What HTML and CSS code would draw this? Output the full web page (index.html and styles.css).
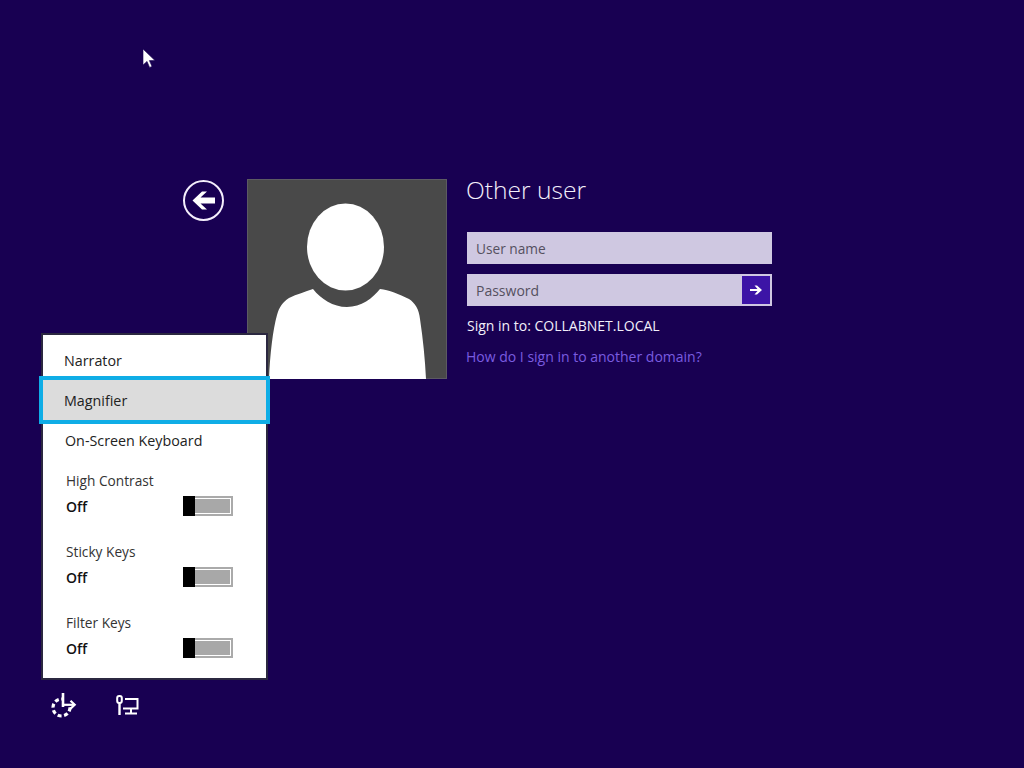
FILE: index.html
```html
<!DOCTYPE html>
<html lang="en">
<head>
<meta charset="utf-8">
<title>Sign in</title>
<link rel="stylesheet" href="styles.css">
</head>
<body>
<main class="screen">
  <svg class="cursor" width="14" height="21" viewBox="0 0 14 21"><path d="M1 1v16l4-3.600 2.600 6 2.400-1-2.600-5.800H13z" fill="#fff" stroke="#180052" stroke-width=".6"/></svg>

  <section class="login">
    <button class="back" type="button" aria-label="Back">
      <svg width="42" height="42" viewBox="0 0 42 42"><circle cx="21.500" cy="20.500" r="19.500" fill="none" stroke="#f4eefc" stroke-width="2"/><path d="M10.500 20.500l9.500-9h5l-6.500 6h14.500v6H18.500l6.500 6h-5z" fill="#fff"/></svg>
    </button>
    <div class="tile">
      <svg width="200" height="200" viewBox="0 0 200 200"><ellipse cx="98.500" cy="68" rx="38.500" ry="43.500" fill="#fff"/><path d="M22 200C23 175 26 150 30 136C32 128 36 123 42 119C50 115 58 113 66 110C74 120 86 128 100 128C114 128 126 119 133 110C142 111 152 115 162 120C168 124 172 130 173 140C176 160 178 180 179 200Z" fill="#fff"/></svg>
    </div>
    <div class="form">
      <h1 class="title">Other user</h1>
      <div class="field">User name</div>
      <div class="field field-password">
        <span>Password</span>
        <span class="submit"><svg width="14" height="12" viewBox="0 0 14 12"><path d="M1 5h7.500L5.500 1.500H8L13 6 8 10.500H5.500L8.500 7H1z" fill="#fff"/></svg></span>
      </div>
      <p class="domain">Sign in to: COLLABNET.LOCAL</p>
      <a class="link" href="#">How do I sign in to another domain?</a>
    </div>
  </section>

  <section class="access">
    <div class="menu">
      <div class="item item-narrator">Narrator</div>
      <div class="item item-focus">Magnifier</div>
      <div class="item item-keyboard">On-Screen Keyboard</div>
      <div class="group">
        <div class="group-label">High Contrast</div>
        <div class="group-row"><span class="state">Off</span><span class="toggle"><span class="thumb"></span></span></div>
      </div>
      <div class="group">
        <div class="group-label">Sticky Keys</div>
        <div class="group-row"><span class="state">Off</span><span class="toggle"><span class="thumb"></span></span></div>
      </div>
      <div class="group">
        <div class="group-label">Filter Keys</div>
        <div class="group-row"><span class="state">Off</span><span class="toggle"><span class="thumb"></span></span></div>
      </div>
    </div>
    <div class="tray">
      <svg width="26" height="26" viewBox="0 0 26 26" fill="none" stroke="#fff"><circle cx="10.500" cy="15.500" r="8.500" stroke-width="3.200" stroke-dasharray="4 2.600"/><path d="M13 5h9v8h-9z" fill="#180052" stroke="none"/><path d="M12 1v14" stroke-width="2.600"/><path d="M12 12.800h11.500" stroke-width="2.200"/><path d="M19.500 8.800l4.200 4-4.200 4" stroke-width="2.200"/></svg>
      <svg width="23" height="21" viewBox="0 0 23 21" fill="none" stroke="#fff" stroke-width="2"><rect x="1.200" y="1" width="4.600" height="7" rx="2"/><path d="M3.500 8v12" stroke-width="2.400"/><path d="M9 4h12.500v9.500H7M15 13.500V18M9 18.500h12"/></svg>
    </div>
  </section>
</main>
</body>
</html>
```
FILE: styles.css
```css
* { box-sizing: border-box; }
html, body { margin: 0; padding: 0; }
body { background: #180052; font-family: "Open Sans", "Noto Sans", sans-serif; }
.screen { position: relative; width: 1024px; height: 768px; overflow: hidden; background: #180052; }
.cursor { position: absolute; left: 142px; top: 48px; }

.login { display: flex; align-items: flex-start; padding: 179px 0 0 182px; }
.back { flex: none; width: 42px; height: 42px; margin: 1px 23px 0 0; padding: 0; background: none; border: 0; }
.back svg { display: block; }
.tile { flex: none; width: 200px; height: 200px; background: #494949; box-shadow: inset 0 0 0 1px #5c5a62; }
.tile svg { display: block; }
.form { width: 305px; margin-left: 20px; color: #fff; }
.title { margin: 0 0 21px -1px; height: 32px; font-size: 24.600px; line-height: 22px; font-weight: 300; color: #f3effa; white-space: nowrap; }
.field { display: flex; align-items: center; justify-content: space-between; height: 32px; padding-left: 9px; margin-bottom: 10px; background: #cfc8e1; color: #55505f; font-size: 13.700px; }
.field-password { padding-right: 2px; font-size: 14px; }
.submit { display: flex; align-items: center; justify-content: center; width: 28px; height: 28px; background: #3c14a6; }
.submit svg { display: block; }
.domain { margin: 0 0 10px; font-size: 14px; line-height: 20px; color: #f2effa; white-space: nowrap; }
.link { display: block; font-size: 14px; line-height: 21px; color: #7a5ce0; text-decoration: none; margin-left: -1px; white-space: nowrap; }

.access { position: absolute; left: 41px; top: 333px; width: 227px; }
.menu { width: 227px; height: 347px; padding-top: 10px; background: #fff; border: 2px solid #2b2840; color: #222; font-size: 14.300px; }
.item { display: flex; align-items: center; }
.item-narrator { height: 31px; padding-left: 21px; }
.item-focus { height: 48px; margin: 0 -4px; padding-left: 21px; background: #dcdcdc; border: 4px solid #0fade6; }
.item-keyboard { height: 32px; padding-left: 22px; }
.group { width: 190px; margin-left: 23px; height: 71px; }
.item-keyboard + .group { margin-top: 15px; }
.group-label { height: 20px; line-height: 20px; font-size: 13.700px; color: #333; white-space: nowrap; }
.group-row { display: flex; align-items: center; justify-content: space-between; width: 167px; height: 20px; margin-top: 5px; }
.state { font-size: 14px; font-weight: 600; color: #111; }
.toggle { position: relative; display: block; width: 50px; height: 20px; background: #a8a8a8; border: 2px solid #aaa; box-shadow: inset 0 0 0 1px #fff; }
.thumb { position: absolute; left: -2px; top: -2px; width: 12px; height: 20px; background: #000; }

.tray { display: flex; align-items: flex-start; gap: 39px; padding: 12px 0 0 10px; }
.tray svg { display: block; flex: none; }
.tray svg + svg { margin-top: 3px; }
```
